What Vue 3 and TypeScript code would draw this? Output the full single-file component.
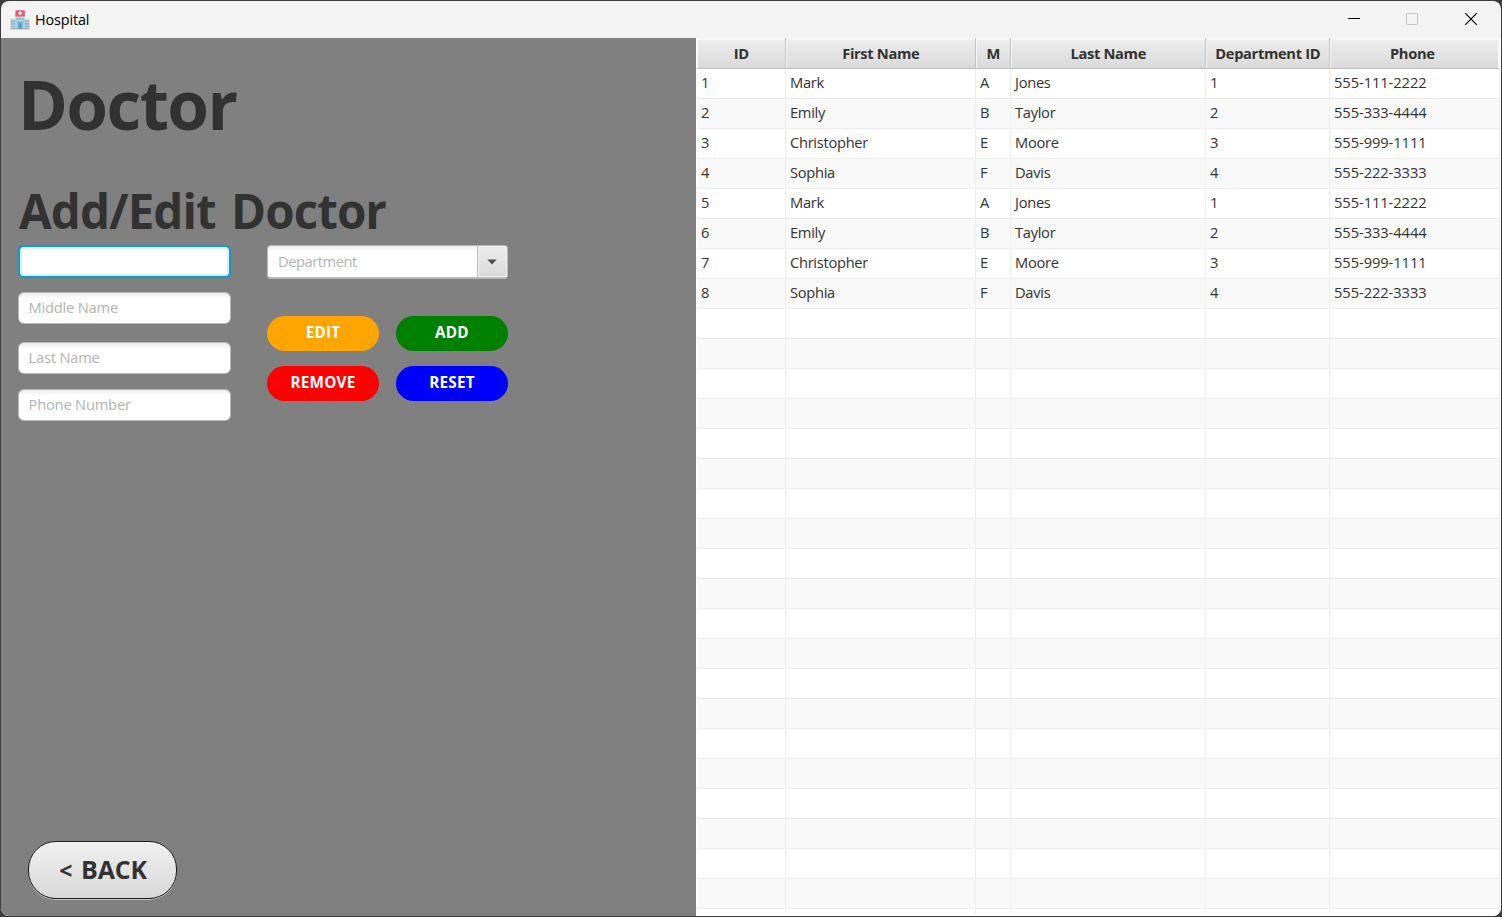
<script setup lang="ts">
import { ref } from 'vue'

interface Doctor {
  id: number
  first: string
  middle: string
  last: string
  department: number
  phone: string
}

const doctors: Doctor[] = [
  { id: 1, first: 'Mark', middle: 'A', last: 'Jones', department: 1, phone: '555-111-2222' },
  { id: 2, first: 'Emily', middle: 'B', last: 'Taylor', department: 2, phone: '555-333-4444' },
  { id: 3, first: 'Christopher', middle: 'E', last: 'Moore', department: 3, phone: '555-999-1111' },
  { id: 4, first: 'Sophia', middle: 'F', last: 'Davis', department: 4, phone: '555-222-3333' },
  { id: 5, first: 'Mark', middle: 'A', last: 'Jones', department: 1, phone: '555-111-2222' },
  { id: 6, first: 'Emily', middle: 'B', last: 'Taylor', department: 2, phone: '555-333-4444' },
  { id: 7, first: 'Christopher', middle: 'E', last: 'Moore', department: 3, phone: '555-999-1111' },
  { id: 8, first: 'Sophia', middle: 'F', last: 'Davis', department: 4, phone: '555-222-3333' },
]

const columns = ['ID', 'First Name', 'M', 'Last Name', 'Department ID', 'Phone']

const rows: string[][] = Array.from({ length: 29 }, (_, i) => {
  const d = doctors[i]
  return d
    ? [String(d.id), d.first, d.middle, d.last, String(d.department), d.phone]
    : columns.map(() => '')
})

const firstName = ref('')
const middleName = ref('')
const lastName = ref('')
const phone = ref('')
</script>

<template>
  <div class="desktop">
    <div class="window">
      <header class="titlebar">
        <svg class="logo" width="20" height="20" viewBox="0 0 20 20">
          <rect x="5" y="5" width="10" height="14" fill="#c3d3dc" />
          <rect x="0.5" y="9" width="5.5" height="10" fill="#b9cdd8" />
          <rect x="14" y="9" width="5.5" height="10" fill="#b9cdd8" />
          <rect x="0" y="8.2" width="6" height="1.2" fill="#dbe5ea" />
          <rect x="14" y="8.2" width="6" height="1.2" fill="#dbe5ea" />
          <rect x="5.4" y="0.2" width="9.4" height="6.2" rx="0.8" fill="#f0596b" />
          <path d="M10.1 1.4v3.8M8.2 3.3h3.8" stroke="#fff" stroke-width="1.4" />
          <g fill="#5bb3d6">
            <rect x="1.6" y="10.4" width="1.2" height="1.6" /><rect x="3.6" y="10.4" width="1.2" height="1.6" />
            <rect x="1.6" y="13" width="1.2" height="1.6" /><rect x="3.6" y="13" width="1.2" height="1.6" />
            <rect x="1.6" y="15.6" width="1.2" height="1.6" /><rect x="3.6" y="15.6" width="1.2" height="1.6" />
            <rect x="15.4" y="10.4" width="1.2" height="1.6" /><rect x="17.4" y="10.4" width="1.2" height="1.6" />
            <rect x="15.4" y="13" width="1.2" height="1.6" /><rect x="17.4" y="13" width="1.2" height="1.6" />
            <rect x="15.4" y="15.6" width="1.2" height="1.6" /><rect x="17.4" y="15.6" width="1.2" height="1.6" />
            <rect x="6.8" y="8.2" width="1.4" height="1.8" /><rect x="9.4" y="8.2" width="1.4" height="1.8" />
            <rect x="12" y="8.2" width="1.4" height="1.8" />
            <rect x="7.6" y="12.8" width="5" height="6" />
          </g>
          <rect x="6.4" y="11.4" width="7.4" height="1.4" fill="#57c3e8" />
          <rect x="9.8" y="13.4" width="0.7" height="5.4" fill="#1c7fae" />
          <rect x="0" y="18.4" width="20" height="0.9" fill="#a59a94" />
        </svg>
        <span class="app-name">Hospital</span>
        <svg class="controls" width="130" height="14" viewBox="0 0 130 14">
          <path d="M0 6.5h12" stroke="#000" />
          <rect x="58.5" y="1.5" width="11" height="11" rx="1" fill="none" stroke="#c4c4c4" />
          <path d="M117.2 1.2l11.6 11.6M128.8 1.2L117.2 12.8" stroke="#000" stroke-width="1.15" />
        </svg>
      </header>

      <main class="body">
        <section class="panel">
          <h1>Doctor</h1>
          <h2>Add/Edit Doctor</h2>
          <div class="form">
            <div class="fields">
              <input v-model="firstName" class="field focused" type="text" />
              <input v-model="middleName" class="field" type="text" placeholder="Middle Name" />
              <input v-model="lastName" class="field last" type="text" placeholder="Last Name" />
              <input v-model="phone" class="field" type="text" placeholder="Phone Number" />
            </div>
            <div class="side">
              <div class="combo">
                <span class="combo-text">Department</span>
                <span class="combo-arrow">
                  <svg width="10" height="6" viewBox="0 0 10 6"><path d="M0.3 0.5h9.4L5 5.6z" fill="#4f4f4f" /></svg>
                </span>
              </div>
              <div class="actions">
                <button class="pill edit">EDIT</button>
                <button class="pill add">ADD</button>
                <button class="pill remove">REMOVE</button>
                <button class="pill reset">RESET</button>
              </div>
            </div>
          </div>
          <button class="back"><span class="lt">&lt;</span><span>BACK</span></button>
        </section>

        <section class="table">
          <div class="row head">
            <div v-for="c in columns" :key="c" class="th"><span>{{ c }}</span></div>
          </div>
          <div class="rows">
            <div v-for="(r, i) in rows" :key="i" class="row line">
              <div v-for="(cell, j) in r" :key="j" class="td">{{ cell }}</div>
            </div>
          </div>
        </section>
      </main>
    </div>
  </div>
</template>

<style>
body {
  margin: 0;
  overflow: hidden;
}
</style>

<style scoped>
.desktop {
  box-sizing: border-box;
  width: 1502px;
  height: 917px;
  padding: 1px;
  background: #3e3b3d;
  font-family: 'Open Sans', 'Noto Sans', sans-serif;
  font-size: 14.7px;
  color: #323232;
}
.window {
  display: flex;
  flex-direction: column;
  height: 915px;
  border-radius: 8px;
  overflow: hidden;
  background: #f3f3f3;
}
.titlebar {
  display: flex;
  flex: none;
  align-items: center;
  height: 37px;
  padding: 0 23px 0 9px;
  color: #000;
}
.logo {
  margin-top: 1px;
}
.app-name {
  flex: 1;
  margin-left: 5px;
  font-size: 14.4px;
  letter-spacing: -0.12px;
}
.controls {
  margin-top: -1px;
}
.body {
  display: flex;
  flex: 1;
  min-height: 0;
}
.panel {
  box-sizing: border-box;
  display: flex;
  flex-direction: column;
  align-items: flex-start;
  width: 695px;
  padding: 26px 0 17px 17px;
  background: #808080;
}
h1,
h2 {
  margin: 0;
  font-weight: 700;
  white-space: nowrap;
}
h1 {
  height: 80px;
  font-size: 67.5px;
  line-height: 80px;
  letter-spacing: -1.6px;
}
h2 {
  height: 56px;
  margin-top: 39px;
  padding-left: 1px;
  font-size: 47.5px;
  line-height: 56px;
  letter-spacing: -0.95px;
  word-spacing: 4px;
}
.form {
  display: flex;
  gap: 36px;
  margin-top: 6px;
}
.fields {
  display: flex;
  flex-direction: column;
  width: 213px;
}
.field {
  box-sizing: border-box;
  width: 213px;
  height: 32px;
  margin: 0 0 14px;
  padding: 0 10px 2px 9.5px;
  border: 1px solid #b9b9b9;
  border-radius: 6px;
  outline: none;
  background: linear-gradient(#ececec, #fff 6px);
  font: inherit;
  letter-spacing: -0.2px;
}
.field:nth-child(2) {
  margin-bottom: 18px;
}
.field.last {
  margin-bottom: 15px;
}
.field::placeholder {
  color: #b3b3b3;
  opacity: 1;
}
.field.focused {
  height: 33px;
  margin-bottom: 14px;
  border: 2px solid #149ac9;
  background: #fff;
  box-shadow: inset 0 0 0 2px #dff1f8, 0 0 1px #149ac9;
}
.side {
  display: flex;
  flex-direction: column;
}
.combo {
  box-sizing: border-box;
  display: flex;
  width: 241px;
  height: 34px;
  border: 1px solid #b9b9b9;
  border-bottom-width: 2px;
  border-radius: 4px;
  background: linear-gradient(#ececec, #fff 6px);
  overflow: hidden;
}
.combo-text {
  flex: 1;
  padding-left: 10px;
  color: #b3b3b3;
  line-height: 30px;
  letter-spacing: -0.45px;
}
.combo-arrow {
  box-sizing: border-box;
  display: flex;
  align-items: center;
  justify-content: center;
  width: 30px;
  padding-right: 1px;
  border-left: 1px solid #bababa;
  background: linear-gradient(#ececec, #d9d9d9);
  box-shadow: inset 0 0 0 1px #f0f0f0;
}
.actions {
  display: grid;
  grid-template-columns: 112px 112px;
  grid-auto-rows: 35px;
  gap: 15px 17px;
  margin-top: 36.5px;
}
.pill {
  height: 35.5px;
  padding: 0 0 2px;
  border: 0;
  border-radius: 18px;
  color: #fff;
  font: 700 15.3px 'Open Sans', 'Noto Sans', sans-serif;
  letter-spacing: 0.2px;
}
.edit { background: #ffa500; }
.add { background: #008000; }
.remove { background: #f00; }
.reset { background: #00f; }
.back {
  display: flex;
  align-items: center;
  justify-content: center;
  box-sizing: border-box;
  gap: 9px;
  width: 149px;
  height: 58px;
  margin: auto 0 0 10px;
  padding: 0 0 3px 1px;
  border: 1.5px solid #1c1c1c;
  border-radius: 28px;
  background: linear-gradient(#f0f0f0, #d8d8d8);
  box-shadow: 0 1px 0 #c6c6c6;
  color: #323232;
  font: 700 25px 'Open Sans', 'Noto Sans', sans-serif;
  letter-spacing: -0.2px;
}
.lt {
  padding-top: 2px;
  font-size: 23px;
  line-height: 34px;
}
.table {
  display: flex;
  flex-direction: column;
  flex: 1;
  min-width: 0;
  padding: 0 1px 2px 1px;
  background: #fff;
}
.row {
  display: grid;
  grid-template-columns: 89px 190px 35px 195px 124px 170px;
  flex: none;
}
.th {
  box-sizing: border-box;
  height: 31px;
  padding: 1px 0 0 0.5px;
  border-right: 1px solid #c3c3c3;
  border-bottom: 1px solid #c0c0c0;
  background: linear-gradient(#fff 1px, #ededed 2px, #d9d9d9);
  box-shadow: inset 1px 1px 0 #f6f6f6;
  font-weight: 700;
  line-height: 29px;
  text-align: center;
  letter-spacing: -0.35px;
  white-space: nowrap;
}
.th:last-child {
  padding-right: 4px;
  border-right: 2px solid #f8f8f8;
}
.rows {
  flex: 1;
  min-height: 0;
  overflow: hidden;
}
.td {
  box-sizing: border-box;
  height: 30px;
  padding-left: 4px;
  border-right: 1px solid #ededed;
  border-bottom: 1px solid #ededed;
  line-height: 27px;
  letter-spacing: -0.3px;
  white-space: nowrap;
}
.td:last-child {
  letter-spacing: -0.07px;
}
.line:nth-child(even) .td {
  background: #f9f9f9;
}
</style>
